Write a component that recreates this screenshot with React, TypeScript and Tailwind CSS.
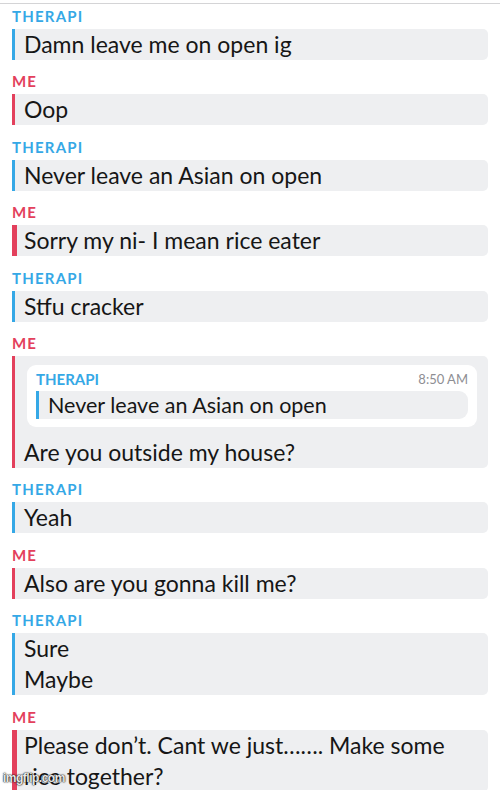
import React from "react"

const BLUE = "THERAPI"

type Msg = { who: "them" | "me"; lines: string[]; thick?: boolean }

const msgs: Msg[] = [
  { who: "them", lines: ["Damn leave me on open ig"] },
  { who: "me", lines: ["Oop"] },
  { who: "them", lines: ["Never leave an Asian on open"] },
  { who: "me", lines: ["Sorry my ni- I mean rice eater"], thick: true },
  { who: "them", lines: ["Stfu cracker"] },
]

const msgs2: Msg[] = [
  { who: "them", lines: ["Yeah"] },
  { who: "me", lines: ["Also are you gonna kill me?"] },
  { who: "them", lines: ["Sure", "Maybe"] },
  { who: "me", lines: ["Please don\u2019t. Cant we just\u2026\u2026. Make some", "rice together?"], thick: true },
]

function Label({ who }: { who: "them" | "me" }) {
  return (
    <div
      className={
        "h-[16px] leading-[16px] text-[15px] font-bold tracking-[1.2px] mb-[5px] " +
        (who === "them" ? "text-[#35a8e6]" : "text-[#e3405c]")
      }
    >
      {who === "them" ? BLUE : "ME"}
    </div>
  )
}

function Bubble({ m }: { m: Msg }) {
  const bar = m.who === "them" ? "border-[#35a8e6]" : "border-[#e3405c]"
  const w = m.thick ? "border-l-[5px] pl-[7px]" : "border-l-[3px] pl-[9px]"
  return (
    <div className={`bg-[#eeeff1] rounded-r-[5px] ${bar} ${w}`}>
      {m.lines.map((l, i) => (
        <div key={i} className="leading-[31px] text-[23px] text-[#161616] whitespace-nowrap">
          {l}
        </div>
      ))}
    </div>
  )
}

function Message({ m }: { m: Msg }) {
  return (
    <div>
      <Label who={m.who} />
      <Bubble m={m} />
    </div>
  )
}

export default function App() {
  return (
    <div className="relative w-[500px] h-[790px] overflow-hidden bg-white font-['Lato',sans-serif]">
      <div className="h-[3px]" />
      <div className="h-px bg-[#d4d4d6]" />
      <div className="flex flex-col gap-[13.4px] px-[12px] pt-[4px]">
        {msgs.map((m, i) => (
          <Message key={i} m={m} />
        ))}
        <div>
          <Label who="me" />
          <div className="bg-[#eeeff1] rounded-r-[5px] border-l-[3px] border-[#e3405c] pl-[9px] pr-[11px] pt-[9px]">
            <div className="ml-[3px] bg-white rounded-[9px] px-[9px] pt-[6px] pb-[8px]">
              <div className="flex justify-between items-center h-[17px] mb-[3px]">
                <span className="text-[15px] font-bold text-[#35a8e6]">THERAPI</span>
                <span className="text-[13px] text-[#8e8e93]">8:50 AM</span>
              </div>
              <div className="h-[28px] bg-[#eeeff1] rounded-r-[9px] border-l-[3px] border-[#35a8e6] pl-[9px] leading-[28px] text-[21.5px] text-[#161616]">
                Never leave an Asian on open
              </div>
            </div>
            <div className="mt-[10px] leading-[31px] text-[23px] text-[#161616]">
              Are you outside my house?
            </div>
          </div>
        </div>
        {msgs2.map((m, i) => (
          <Message key={i} m={m} />
        ))}
      </div>
      <div className="absolute left-[3px] bottom-[3px] text-[12px] font-bold tracking-[-0.5px] text-[#e8e8e8] font-['Liberation_Sans',sans-serif] [text-shadow:0_0_2px_#000,0_0_1px_#000]">
        imgflip.com
      </div>
    </div>
  )
}
